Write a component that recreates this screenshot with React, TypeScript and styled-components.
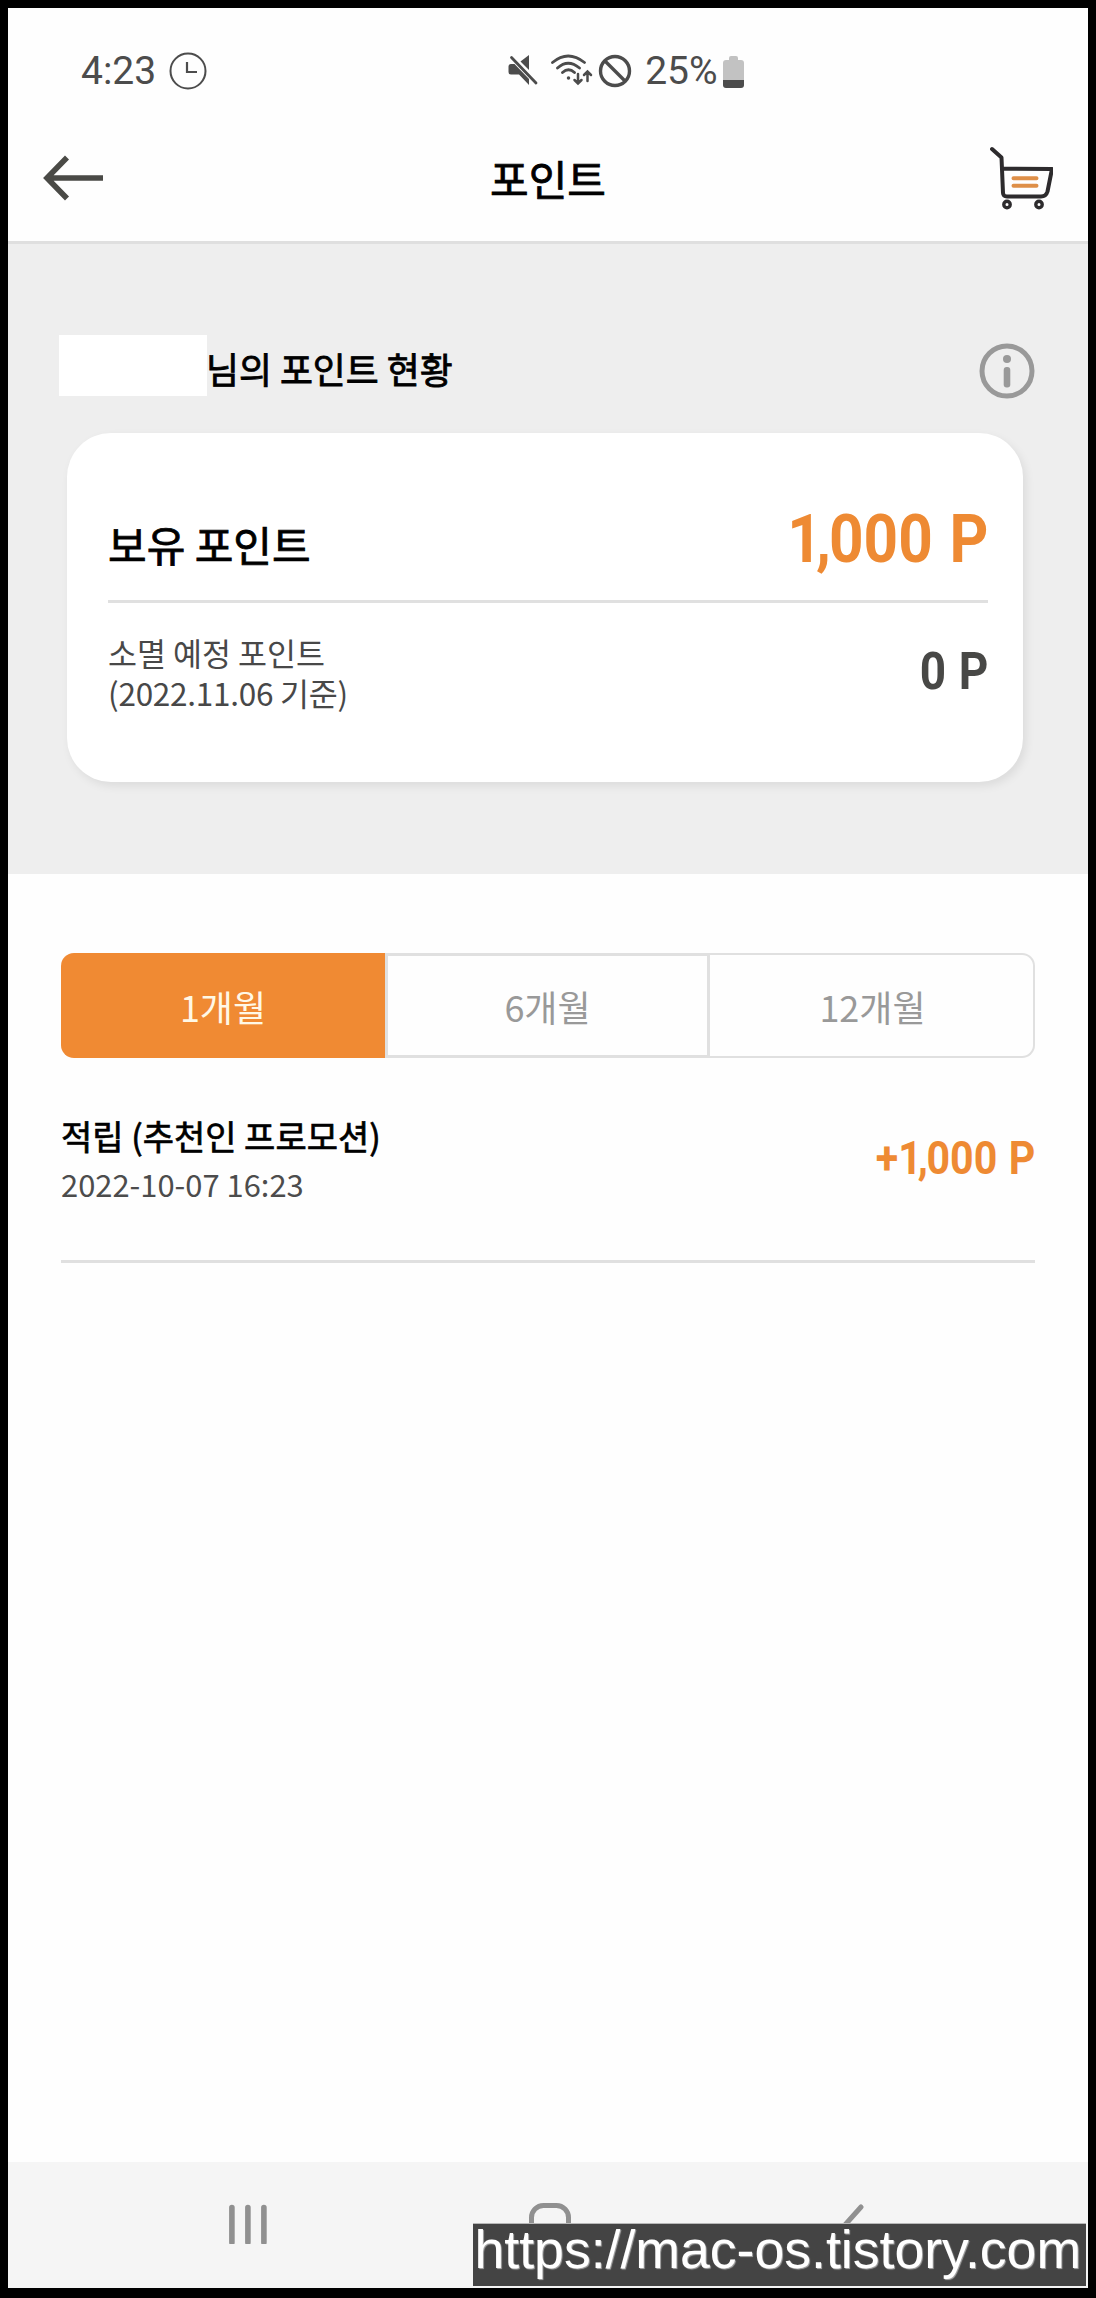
import React from "react";
import styled, { createGlobalStyle } from "styled-components";

const GlobalStyle = createGlobalStyle`
  * { box-sizing: border-box; }
  body { margin: 0; background: #000; }
`;

const korean = `"Noto Sans CJK KR", sans-serif`;
const line = "#e0e0e0";
const orange = "#ee8a33";

const Frame = styled.div`
  position: relative;
  display: flex;
  flex-direction: column;
  width: 1096px;
  height: 2298px;
  border: solid #000;
  border-width: 8px 8px 10px;
  background: #fefefe;
  font-family: ${korean};
  color: #000;
  overflow: hidden;
`;

const StatusBar = styled.div`
  display: flex;
  align-items: center;
  height: 126px;
  padding-left: 73px;
  font: 400 39px/46px Roboto, sans-serif;
  color: #4c4c4c;
`;

const Clock = styled.svg`
  margin-left: 12px;
`;

const StatusIcons = styled.div`
  display: flex;
  align-items: center;
  margin-left: 300px;
`;

const Radio = styled.div`
  display: flex;
  margin: 0 5px 0 11px;
`;

const Percent = styled.span`
  margin: 0 5px 0 13px;
`;

const AppBar = styled.header`
  display: flex;
  justify-content: space-between;
  align-items: center;
  height: 110px;
  padding: 0 35px 20px 35px;
  border-bottom: 3px solid #dfdfdf;
`;

const Side = styled.div<{ $end?: boolean }>`
  display: flex;
  flex: 1;
  justify-content: ${(p) => (p.$end ? "flex-end" : "flex-start")};
`;

const PageTitle = styled.h1`
  margin: 0;
  font-weight: 400;
  -webkit-text-stroke: 0.8px #000;
  font-size: 42px;
  line-height: 60px;
`;

const Summary = styled.section`
  height: 630px;
  padding: 91px 52px 0 51px;
  background: #eee;
`;

const SummaryHead = styled.div`
  display: flex;
  align-items: center;
  height: 61px;
`;

const NameBlank = styled.span`
  width: 148px;
  height: 61px;
  background: #fff;
`;

const SummaryTitle = styled.h2`
  flex: 1;
  margin: 0 0 0 -1px;
  padding-top: 4px;
  font-weight: 400;
  -webkit-text-stroke: 0.8px #000;
  font-size: 35.8px;
  line-height: 56px;
`;

const Info = styled.svg`
  margin: 11px 1px 0 0;
`;

const Card = styled.div`
  height: 349px;
  margin: 37px 13px 0 8px;
  padding: 0 35px 0 41px;
  border-radius: 44px;
  background: #fff;
  box-shadow: 3px 4px 10px rgba(0, 0, 0, 0.08);
`;

const Owned = styled.div`
  display: flex;
  align-items: flex-end;
  justify-content: space-between;
  height: 170px;
  padding-bottom: 28px;
  border-bottom: 3px solid ${line};
`;

const OwnedLabel = styled.span`
  font-weight: 400;
  -webkit-text-stroke: 0.8px #000;
  font-size: 42px;
  line-height: 56px;
`;

const Expiring = styled.div`
  display: flex;
  justify-content: space-between;
  padding-top: 29px;
`;

const ExpiringLabel = styled.div`
  font-size: 31.5px;
  line-height: 40px;
  color: #484848;
`;

const ExpiringDate = styled.div`
  letter-spacing: -0.25px;
`;

const Amount = styled.span<{ $size: number; $color: string; $lift?: number; $drop?: number }>`
  font-family: Roboto, sans-serif;
  font-weight: 700;
  font-size: ${(p) => p.$size}px;
  line-height: 60px;
  color: ${(p) => p.$color};
  white-space: pre;
  margin-top: ${(p) => p.$lift ?? 0}px;
  margin-bottom: ${(p) => p.$drop ?? 0}px;
  transform: scaleX(0.9);
  transform-origin: right center;
  word-spacing: 0.03em;
`;

const Tight = styled.span<{ $by: number }>`
  letter-spacing: ${(p) => -p.$by}em;
`;

const History = styled.section`
  flex: 1;
  padding: 79px 53px 0;
`;

const Tabs = styled.div`
  display: flex;
  height: 105px;
`;

const Tab = styled.button<{ $kind: "active" | "middle" | "last" }>`
  width: ${(p) => (p.$kind === "active" ? 324 : 325)}px;
  padding: 0;
  font-family: ${korean};
  font-size: 36px;
  line-height: 52px;
  border: 0 solid ${line};
  ${(p) =>
    p.$kind === "active" &&
    `background: #f08a33; color: #fff8e6; border-radius: 13px 0 0 13px;`}
  ${(p) =>
    p.$kind === "middle" &&
    `background: transparent; color: #999; border-width: 3px;`}
  ${(p) =>
    p.$kind === "last" &&
    `background: transparent; color: #999; padding-left: 2px; border-width: 2px 2px 2px 0; border-radius: 0 13px 13px 0;`}
`;

const Entry = styled.div`
  display: flex;
  justify-content: space-between;
  height: 205px;
  padding-top: 53px;
  border-bottom: 3px solid ${line};
`;

const EntryTitle = styled.div`
  font-weight: 400;
  -webkit-text-stroke: 0.7px #000;
  font-size: 34px;
  line-height: 50px;
`;

const EntryDate = styled.div`
  font-size: 30.9px;
  line-height: 46px;
  color: #4c4c4c;
`;

const NavBar = styled.nav`
  display: flex;
  align-items: flex-start;
  height: 126px;
  padding: 41px 0 0 221px;
  background: #f5f5f5;
`;

const NavIcon = styled.svg<{ $gap?: number }>`
  margin-left: ${(p) => p.$gap ?? 0}px;
`;

const Watermark = styled.div`
  position: absolute;
  right: 2px;
  bottom: 2px;
  width: 613px;
  height: 63px;
  padding-left: 1.5px;
  border-top: 1px solid #b8b8b8;
  background: #444;
  color: #fff;
  font: 53.6px/51px "Liberation Sans", Arial, sans-serif;
  white-space: nowrap;
  text-shadow: 1px 1px 1px #aaa;
`;

const MuteIcon = () => (
  <svg width="32" height="34" viewBox="0 0 32 34" fill="#4c4c4c">
    <path d="M12.5 7.5 21 1v15z" />
    <path d="M3 10h3.500l14.500 15v6L11 20.500H3q-2.500 0-2.500-2.500v-5.500Q.5 10 3 10z" />
    <path d="M3.500 3.500 28 29" stroke="#4c4c4c" strokeWidth="2.800" strokeLinecap="round" />
  </svg>
);

const WifiIcon = () => (
  <svg width="42" height="34" viewBox="0 0 42 34" fill="none" stroke="#4c4c4c" strokeWidth="2.800" strokeLinecap="round">
    <path d="M1.500 8.500Q17 -4.500 33.500 8.500M6.500 14Q17 4.500 28.500 14M11.500 18.500Q17.500 13 23.500 18.500" />
    <circle cx="17.500" cy="24" r="1" fill="#4c4c4c" strokeWidth="1.500" />
    <path d="M27 20v9M23.500 26l3.500 3.500 3.500-3.500M36.500 27V17.500M33 21l3.500-3.500L40 21" strokeWidth="2.500" />
  </svg>
);

const BlockIcon = () => (
  <svg width="34" height="34" viewBox="0 0 34 34" fill="none" stroke="#4c4c4c" strokeWidth="3.400">
    <circle cx="17" cy="17" r="14.500" />
    <path d="M7 7l20 20" />
  </svg>
);

const BatteryIcon = () => (
  <svg width="21" height="33" viewBox="0 0 21 33">
    <path d="M6 3q0-2 2-2h5q2 0 2 2v2h3q3 0 3 3v17H0V8q0-3 3-3h3z" fill="#c2c2c2" />
    <path d="M0 25h21v5q0 3-3 3H3q-3 0-3-3z" fill="#4c4c4c" />
  </svg>
);

const BackArrow = () => (
  <svg width="61" height="46" viewBox="0 0 61 46" fill="none" stroke="#4a4a46" strokeWidth="5.600">
    <path d="M24 2.500 4 23l20 20.500M4 23h56" />
  </svg>
);

const CartIcon = () => (
  <svg width="64" height="66" viewBox="0 0 64 66" fill="none" stroke="#2d2b2d" strokeWidth="4" strokeLinecap="round" strokeLinejoin="round">
    <path d="M3 4l9.500 8.500L14 48q.2 3.500 4 3.500h34q5 0 6.500-5L63 24l-50-.5" transform="translate(0 0)" />
    <circle cx="18" cy="59.500" r="3.200" strokeWidth="3.400" />
    <circle cx="50" cy="59.500" r="3.200" strokeWidth="3.400" />
    <path d="M24.500 33.200h23M24.500 40.800h23" stroke="#de8f48" />
  </svg>
);

export default function App() {
  return (
    <>
      <GlobalStyle />
      <Frame>
        <StatusBar>
          <span>4:23</span>
          <Clock width="40" height="40" viewBox="0 0 40 40" fill="none" stroke="#4c4c4c" strokeWidth="2">
            <circle cx="20" cy="20" r="17.500" />
            <path d="M19 11v10h10" strokeWidth="2.200" />
          </Clock>
          <StatusIcons>
            <MuteIcon />
            <Radio>
              <WifiIcon />
            </Radio>
            <BlockIcon />
            <Percent>25%</Percent>
            <BatteryIcon />
          </StatusIcons>
        </StatusBar>
        <AppBar>
          <Side>
            <BackArrow />
          </Side>
          <PageTitle>포인트</PageTitle>
          <Side $end>
            <CartIcon />
          </Side>
        </AppBar>
        <Summary>
          <SummaryHead>
            <NameBlank />
            <SummaryTitle>님의 포인트 현황</SummaryTitle>
            <Info width="56" height="56" viewBox="0 0 56 56">
              <circle cx="28" cy="28" r="25" fill="none" stroke="#999" strokeWidth="5" />
              <circle cx="28" cy="16" r="4" fill="#999" />
              <rect x="24.700" y="24" width="6.600" height="20.500" rx="3" fill="#999" />
            </Info>
          </SummaryHead>
          <Card>
            <Owned>
              <OwnedLabel>보유 포인트</OwnedLabel>
              <Amount $size={67} $color={orange} $drop={3}>
                <Tight $by={0.1}>1</Tight>
                <Tight $by={0.03}>,</Tight>000 P
              </Amount>
            </Owned>
            <Expiring>
              <ExpiringLabel>
                <div>소멸 예정 포인트</div>
                <ExpiringDate>(2022.11.06 기준)</ExpiringDate>
              </ExpiringLabel>
              <Amount $size={51} $color="#484846" $lift={10}>
                0 P
              </Amount>
            </Expiring>
          </Card>
        </Summary>
        <History>
          <Tabs>
            <Tab $kind="active">1개월</Tab>
            <Tab $kind="middle">6개월</Tab>
            <Tab $kind="last">12개월</Tab>
          </Tabs>
          <Entry>
            <div>
              <EntryTitle>적립 (추천인 프로모션)</EntryTitle>
              <EntryDate>2022-10-07 16:23</EntryDate>
            </div>
            <Amount $size={45.7} $color={orange} $lift={18}>
              +<Tight $by={0.1}>1</Tight>
              <Tight $by={0.03}>,</Tight>000 P
            </Amount>
          </Entry>
        </History>
        <NavBar>
          <NavIcon width="38" height="41" viewBox="0 -1 38 41" fill="none" stroke="#909090" strokeWidth="5.600" strokeLinecap="round">
            <path d="M2.900 3.500v35M18.900 3.500v35M34.900 3.500v35" />
          </NavIcon>
          <NavIcon $gap={262} width="42" height="42" viewBox="0 0 42 42" fill="none" stroke="#909090" strokeWidth="5">
            <rect x="2.500" y="2.500" width="37" height="37" rx="12" />
          </NavIcon>
          <NavIcon $gap={270} width="24" height="42" viewBox="0 0 24 42" fill="none" stroke="#909090" strokeWidth="5" strokeLinecap="round" strokeLinejoin="round">
            <path d="M20 4 3 23l17 17" />
          </NavIcon>
        </NavBar>
        <Watermark>https://mac-os.tistory.com</Watermark>
      </Frame>
    </>
  );
}
